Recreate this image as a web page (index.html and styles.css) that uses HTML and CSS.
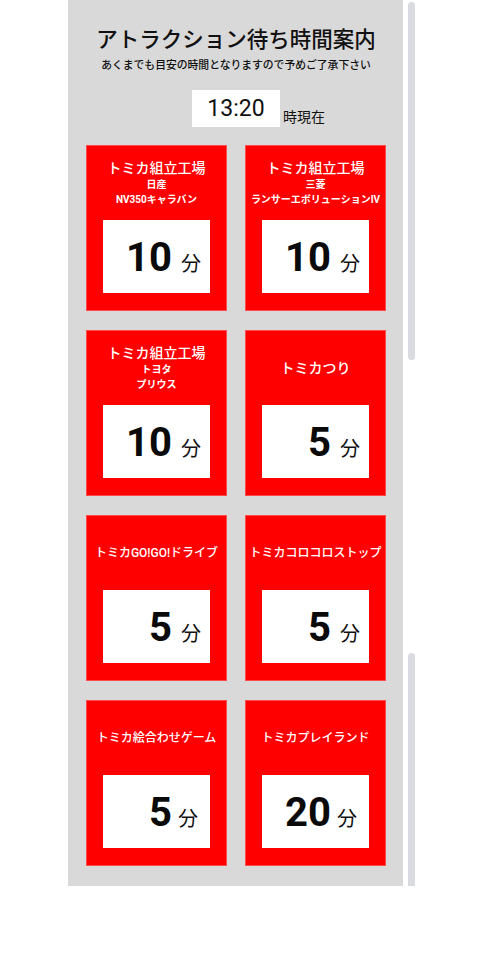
FILE: index.html
```html
<!DOCTYPE html>
<html lang="ja">
  <head>
    <meta charset="UTF-8" />
    <meta name="viewport" content="width=device-width, initial-scale=1.0" />
    <title>アトラクション待ち時間案内</title>
    <link rel="stylesheet" href="styles.css">
  </head>

  <body>
    <div class="page">
      <div class="board">
        <h1 class="title">アトラクション待ち時間案内</h1>
        <p class="note">あくまでも目安の時間となりますので予めご了承下さい</p>

        <div class="clock">
          <div class="clock-time">13:20</div>
          <div class="clock-label">時現在</div>
        </div>

        <div class="cards">
          <div class="card">
            <div class="card-head">
              <div class="card-name">トミカ組立工場</div>
              <div class="card-sub">日産</div>
              <div class="card-sub">NV350キャラバン</div>
            </div>
            <div class="wait"><span class="num">10</span><span class="unit">分</span></div>
          </div>

          <div class="card">
            <div class="card-head">
              <div class="card-name">トミカ組立工場</div>
              <div class="card-sub">三菱</div>
              <div class="card-sub">ランサーエボリューションIV</div>
            </div>
            <div class="wait"><span class="num">10</span><span class="unit">分</span></div>
          </div>

          <div class="card">
            <div class="card-head">
              <div class="card-name">トミカ組立工場</div>
              <div class="card-sub">トヨタ</div>
              <div class="card-sub">プリウス</div>
            </div>
            <div class="wait"><span class="num">10</span><span class="unit">分</span></div>
          </div>

          <div class="card">
            <div class="card-head">
              <div class="card-name">トミカつり</div>
            </div>
            <div class="wait"><span class="num">5</span><span class="unit">分</span></div>
          </div>

          <div class="card">
            <div class="card-head">
              <div class="card-name small">トミカGO!GO!ドライブ</div>
            </div>
            <div class="wait"><span class="num">5</span><span class="unit">分</span></div>
          </div>

          <div class="card">
            <div class="card-head">
              <div class="card-name small">トミカコロコロストップ</div>
            </div>
            <div class="wait"><span class="num">5</span><span class="unit">分</span></div>
          </div>

          <div class="card">
            <div class="card-head">
              <div class="card-name small">トミカ絵合わせゲーム</div>
            </div>
            <div class="wait tight"><span class="num">5</span><span class="unit">分</span></div>
          </div>

          <div class="card">
            <div class="card-head">
              <div class="card-name small">トミカプレイランド</div>
            </div>
            <div class="wait tight"><span class="num">20</span><span class="unit">分</span></div>
          </div>
        </div>
      </div>

      <div class="rail">
        <div class="rail-bar rail-bar-1"></div>
        <div class="rail-bar rail-bar-2"></div>
      </div>
    </div>
  </body>
</html>
```

FILE: styles.css
```css
* {
  box-sizing: border-box;
}
body {
  margin: 0;
  background: #fff;
  font-family: Roboto, "Noto Sans CJK JP", sans-serif;
  color: #111;
}

.page {
  display: flex;
  align-items: flex-start;
  padding-left: 68px;
}

.board {
  width: 335px;
  background: #d9d9d9;
  padding: 26px 17px 20px 18px;
}

.title {
  margin: 0;
  font-size: 21.5px;
  line-height: 28px;
  font-weight: 500;
  text-align: center;
}

.note {
  margin: 5px 0 0;
  font-size: 10.8px;
  line-height: 14px;
  font-weight: 500;
  text-align: center;
}

.clock {
  display: grid;
  grid-template-columns: 1fr 88px 1fr;
  align-items: end;
  margin-top: 17px;
}

.clock-time {
  grid-column: 2;
  height: 37px;
  background: #fff;
  font-size: 23px;
  line-height: 37px;
  text-align: center;
}

.clock-label {
  padding-left: 3px;
  font-size: 14px;
  line-height: 18px;
  margin-bottom: 1px;
}

.cards {
  display: grid;
  grid-template-columns: 141px 141px;
  column-gap: 18px;
  row-gap: 19px;
  margin-top: 18px;
}

.card {
  height: 166px;
  background: #ff0000;
  border: 1px solid #ff4b4b;
  padding: 0 16px;
}

.card-head {
  height: 74px;
  display: flex;
  flex-direction: column;
  justify-content: center;
  align-items: center;
  color: #fff;
  text-align: center;
  white-space: nowrap;
}

.card-name {
  font-size: 14px;
  line-height: 18px;
  font-weight: 500;
}

.card-name.small {
  font-size: 12px;
}

.card-sub {
  font-size: 10px;
  line-height: 15px;
  font-weight: 700;
}

.wait {
  height: 73px;
  background: #fff;
  display: flex;
  justify-content: flex-end;
  align-items: baseline;
  padding: 18px 9px 0 0;
}

.num {
  font-size: 40px;
  line-height: 40px;
  font-weight: 700;
  color: #0a0a0a;
}

.unit {
  font-size: 20px;
  margin-left: 9px;
}

.wait.tight {
  padding-right: 12px;
}

.wait.tight .unit {
  margin-left: 6px;
}

.rail {
  display: flex;
  flex-direction: column;
  margin-left: 5px;
  width: 7px;
}

.rail-bar {
  background: #dadbe0;
  width: 7px;
}

.rail-bar-1 {
  margin-top: 2px;
  height: 358px;
  border-radius: 4px;
}

.rail-bar-2 {
  margin-top: 293px;
  height: 233px;
  border-radius: 4px 4px 0 0;
}
```
